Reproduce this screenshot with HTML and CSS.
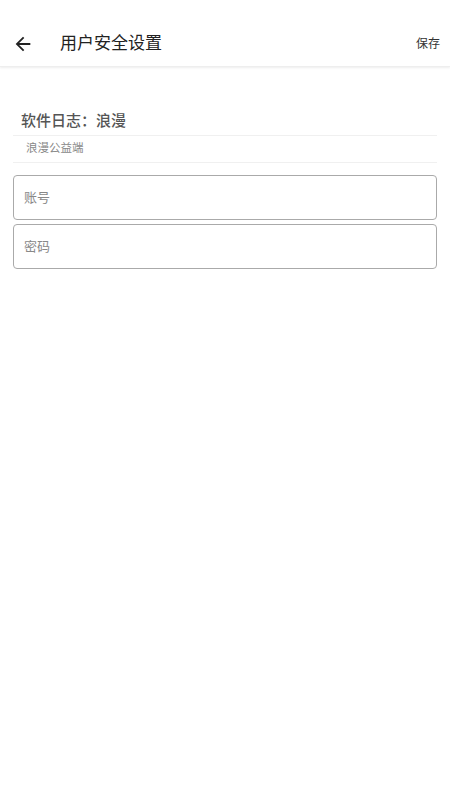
FILE: index.html
```html
<!DOCTYPE html>
<html>
<head>
  <meta charset="UTF-8">
  <meta name="viewport" content="width=device-width, initial-scale=1.0">
  <title>用户安全设置</title>
  <link rel="stylesheet" href="styles.css">
</head>
<body>
  <header class="topbar">
    <span class="back">
      <svg width="22" height="22" viewBox="0 0 24 24"><path d="M20 11H7.83l5.59-5.59L12 4l-8 8 8 8 1.41-1.41L7.83 13H20v-2z" fill="#222"/></svg>
    </span>
    <span class="title">用户安全设置</span>
    <span class="save">保存</span>
  </header>

  <div class="content">
    <div class="section">
      <div class="section-title">软件日志：浪漫</div>
      <div class="section-sub">浪漫公益端</div>
    </div>

    <!-- 账号密码 -->
    <div class="field">
      <input type="text" placeholder="账号">
    </div>
    <div class="field">
      <input type="password" placeholder="密码">
    </div>
  </div>
</body>
</html>
```

FILE: styles.css
```css
body {
  font-family: Roboto, "Noto Sans CJK SC", sans-serif;
  margin: 0;
  padding: 0;
  background: #fff;
  color: #333;
}
.topbar {
  height: 67px;
  display: flex;
  align-items: flex-end;
  padding: 0 10px 12px 12px;
  box-sizing: border-box;
  box-shadow: 0 1px 2px rgba(0, 0, 0, 0.07);
  border-bottom: 1px solid #eee;
}
.back {
  width: 22px;
  height: 22px;
  margin-right: 26px;
  margin-bottom: -1px;
}
.back svg {
  display: block;
}
.title {
  flex: 1;
  font-size: 17px;
  color: #222;
  line-height: 22px;
}
.save {
  font-size: 12px;
  color: #333;
  line-height: 20px;
}
.content {
  padding: 38px 13px 0;
}
.section-title {
  font-size: 15px;
  font-weight: 500;
  color: #555;
  padding: 6px 8px 4px;
  line-height: 20px;
  border-bottom: 1px solid #f0f0f0;
}
.section-sub {
  font-size: 11.5px;
  color: #888;
  padding: 4px 13px 6px;
  line-height: 16px;
  border-bottom: 1px solid #f0f0f0;
}
.section {
  margin-bottom: 12px;
}
.field {
  margin-bottom: 4px;
}
.field input {
  width: 100%;
  height: 45px;
  box-sizing: border-box;
  border: 1px solid #aaa;
  border-radius: 4px;
  padding: 0 10px;
  font-family: Roboto, "Noto Sans CJK SC", sans-serif;
  font-size: 13px;
  color: #333;
  outline: none;
}
.field input::placeholder {
  color: #888;
}
```
